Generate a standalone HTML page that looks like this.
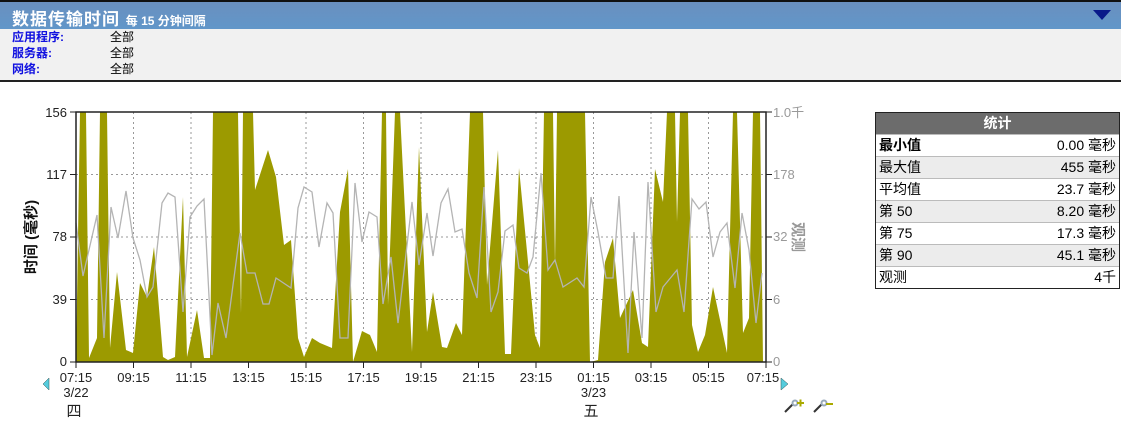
<!DOCTYPE html>
<html><head><meta charset="utf-8"><style>
body{margin:0;width:1129px;height:431px;background:#fff;font-family:"Liberation Sans","Noto Sans CJK SC",sans-serif;position:relative;overflow:hidden}
.hdr{position:absolute;left:0;top:0;width:1121px;height:27px;border-top:2px solid #111;background:linear-gradient(#6a90bf,#6196c9);color:#fff}
.hdr .t{position:absolute;left:12px;top:3px;font-size:17px;font-weight:bold;letter-spacing:1px;white-space:nowrap}
.hdr .s{font-size:12px;letter-spacing:0}
.info{position:absolute;left:0;top:29px;width:1121px;height:51px;background:#f1f1f1;border-bottom:2px solid #222;font-size:12px;line-height:14px}
.info div{position:absolute;left:12px;width:200px;white-space:nowrap}
.info b{color:#1010e0}
.info span{position:absolute;left:98px;top:0;white-space:nowrap}
.stats{position:absolute;left:875px;top:112px;width:243px;border:1px solid #222;font-size:14px}
.stats .h{background:#6c6c6c;color:#fff;font-weight:bold;text-align:center;height:21px;line-height:21px}
.stats .r{height:21px;line-height:21px;border-top:1px solid #bbb;padding:0 3px;display:flex;justify-content:space-between}
.stats .r:nth-child(odd){background:#ececec}
</style></head><body>
<div class="hdr"><div class="t">数据传输时间 <span class="s">每 15 分钟间隔</span></div>
<svg style="position:absolute;left:1093px;top:8px" width="18" height="11"><polygon points="0,0 18,0 9,10" fill="#0a1a8a"/></svg></div>
<div class="info">
<div style="top:1px"><b>应用程序:</b><span>全部</span></div>
<div style="top:17px"><b>服务器:</b><span>全部</span></div>
<div style="top:33px"><b>网络:</b><span>全部</span></div>
</div>
<svg style="position:absolute;left:0;top:95px" width="860" height="336" viewBox="0 95 860 336" font-family="Liberation Sans, Noto Sans CJK SC, sans-serif">
<g stroke="#999" stroke-dasharray="2,3" stroke-width="1">
<line x1="76" y1="174.5" x2="766" y2="174.5"/><line x1="76" y1="237" x2="766" y2="237"/><line x1="76" y1="299.5" x2="766" y2="299.5"/>
<line x1="133.5" y1="112" x2="133.5" y2="362"/><line x1="191" y1="112" x2="191" y2="362"/><line x1="248.5" y1="112" x2="248.5" y2="362"/><line x1="306" y1="112" x2="306" y2="362"/><line x1="363.5" y1="112" x2="363.5" y2="362"/><line x1="421" y1="112" x2="421" y2="362"/><line x1="478.5" y1="112" x2="478.5" y2="362"/><line x1="536" y1="112" x2="536" y2="362"/><line x1="593.5" y1="112" x2="593.5" y2="362"/><line x1="651" y1="112" x2="651" y2="362"/><line x1="708.5" y1="112" x2="708.5" y2="362"/>
</g>
<polygon fill="#9c9a00" points="76,362 80,112 86,112 89,358 97,338 100,112 107,112 110,348 117,272 126,350 133,353 140,283 147,297 154,247 163,357 168,360 175,357 183,197 187,357 197,310 204,358 210,358 213,112 238,112 241,313 243,112 253,112 255,190 268,150 276,177 284,245 291,240 298,338 304,357 312,338 320,343 332,348 340,212 348,169 353,362 362,331 370,335 377,352 382,112 386,112 388,305 395,112 400,112 412,352 419,147 427,332 433,292 442,347 447,348 456,323 462,335 470,112 483,112 487,285 498,150 505,354 511,354 519,168 535,335 540,348 544,112 553,112 555,265 557,112 585,112 590,362 598,360 605,262 613,238 620,318 633,290 642,343 648,347 655,169 663,202 667,112 675,112 677,222 680,112 688,112 692,325 698,352 705,335 713,287 727,353 733,112 737,112 743,333 749,318 753,112 760,112 763,362"/>
<polyline fill="none" stroke="#b4b4b4" stroke-width="1.3" points="76,223 83,276 97,215 104,338 111,207 118,238 126,191 133,238 140,260 147,297 153,287 162,203 168,193 175,197 183,312 190,217 197,206 204,199 212,355 218,303 226,338 233,285 240,233 247,273 255,273 263,304 269,304 276,278 291,288 298,208 304,187 312,192 319,247 327,203 333,213 340,338 348,338 355,183 362,242 369,212 377,217 383,304 391,257 398,323 412,202 419,265 427,213 433,256 441,203 448,189 455,232 462,229 469,273 477,298 484,187 491,312 498,292 505,231 513,225 519,268 527,273 533,257 541,173 548,270 555,260 563,287 577,278 584,287 591,197 598,232 606,278 613,278 619,196 628,353 634,232 642,338 648,182 656,312 663,287 677,270 684,312 692,199 699,209 706,202 713,257 720,232 727,223 735,288 742,213 749,250 756,323 762,273"/>
<rect x="76" y="112" width="690" height="250" fill="none" stroke="#222" stroke-width="1.5"/>
<g stroke="#222"><line x1="70" y1="112" x2="76" y2="112"/><line x1="70" y1="174.5" x2="76" y2="174.5"/><line x1="70" y1="237" x2="76" y2="237"/><line x1="70" y1="299.5" x2="76" y2="299.5"/><line x1="70" y1="362" x2="76" y2="362"/>
<line x1="766" y1="112" x2="772" y2="112"/><line x1="766" y1="174.5" x2="772" y2="174.5"/><line x1="766" y1="237" x2="772" y2="237"/><line x1="766" y1="299.5" x2="772" y2="299.5"/><line x1="766" y1="362" x2="772" y2="362"/>
<line x1="76" y1="362" x2="76" y2="368"/><line x1="133.5" y1="362" x2="133.5" y2="368"/><line x1="191" y1="362" x2="191" y2="368"/><line x1="248.5" y1="362" x2="248.5" y2="368"/><line x1="306" y1="362" x2="306" y2="368"/><line x1="363.5" y1="362" x2="363.5" y2="368"/><line x1="421" y1="362" x2="421" y2="368"/><line x1="478.5" y1="362" x2="478.5" y2="368"/><line x1="536" y1="362" x2="536" y2="368"/><line x1="593.5" y1="362" x2="593.5" y2="368"/><line x1="651" y1="362" x2="651" y2="368"/><line x1="708.5" y1="362" x2="708.5" y2="368"/><line x1="766" y1="362" x2="766" y2="368"/></g>
<g font-size="13" fill="#222" text-anchor="end"><text x="67" y="117">156</text><text x="67" y="179">117</text><text x="67" y="241">78</text><text x="67" y="304">39</text><text x="67" y="366">0</text></g>
<g font-size="13" fill="#999"><text x="773" y="117">1.0千</text><text x="773" y="179">178</text><text x="773" y="241">32</text><text x="773" y="304">6</text><text x="773" y="366">0</text></g>
<g font-size="13" fill="#222" text-anchor="middle"><text x="76" y="382">07:15</text><text x="133.5" y="382">09:15</text><text x="191" y="382">11:15</text><text x="248.5" y="382">13:15</text><text x="306" y="382">15:15</text><text x="363.5" y="382">17:15</text><text x="421" y="382">19:15</text><text x="478.5" y="382">21:15</text><text x="536" y="382">23:15</text><text x="593.5" y="382">01:15</text><text x="651" y="382">03:15</text><text x="708.5" y="382">05:15</text><text x="763" y="382">07:15</text>
<text x="76" y="397">3/22</text><text x="593.5" y="397">3/23</text><text x="74" y="416" font-size="15">四</text><text x="591" y="416" font-size="15">五</text></g>
<text transform="translate(36,237) rotate(-90)" text-anchor="middle" font-size="15" font-weight="bold" fill="#111">时间 (毫秒)</text>
<text transform="translate(793,237) rotate(90)" text-anchor="middle" font-size="15" font-weight="bold" fill="#999">观测</text>
<polygon points="49,378 49,390 43,384" fill="#5cd" stroke="#355" stroke-width=".5"/>
<polygon points="781,378 781,390 788,384" fill="#5cd" stroke="#355" stroke-width=".5"/>
<g stroke-width="2" fill="none"><line x1="785" y1="412" x2="793" y2="404" stroke="#333"/><circle cx="795" cy="403" r="2.5" stroke="#9ab" fill="#fff"/><path d="M797 403h7M800.5 399.5v7" stroke="#aa0"/>
<line x1="814" y1="412" x2="822" y2="404" stroke="#333"/><circle cx="824" cy="403" r="2.5" stroke="#9ab" fill="#fff"/><path d="M826 404h7" stroke="#aa0"/></g>
</svg>
<div class="stats"><div class="h">统计</div>
<div class="r"><b>最小值</b><span>0.00 毫秒</span></div>
<div class="r"><span>最大值</span><span>455 毫秒</span></div>
<div class="r"><span>平均值</span><span>23.7 毫秒</span></div>
<div class="r"><span>第 50</span><span>8.20 毫秒</span></div>
<div class="r"><span>第 75</span><span>17.3 毫秒</span></div>
<div class="r"><span>第 90</span><span>45.1 毫秒</span></div>
<div class="r"><span>观测</span><span>4千</span></div>
</div>
</body></html>
